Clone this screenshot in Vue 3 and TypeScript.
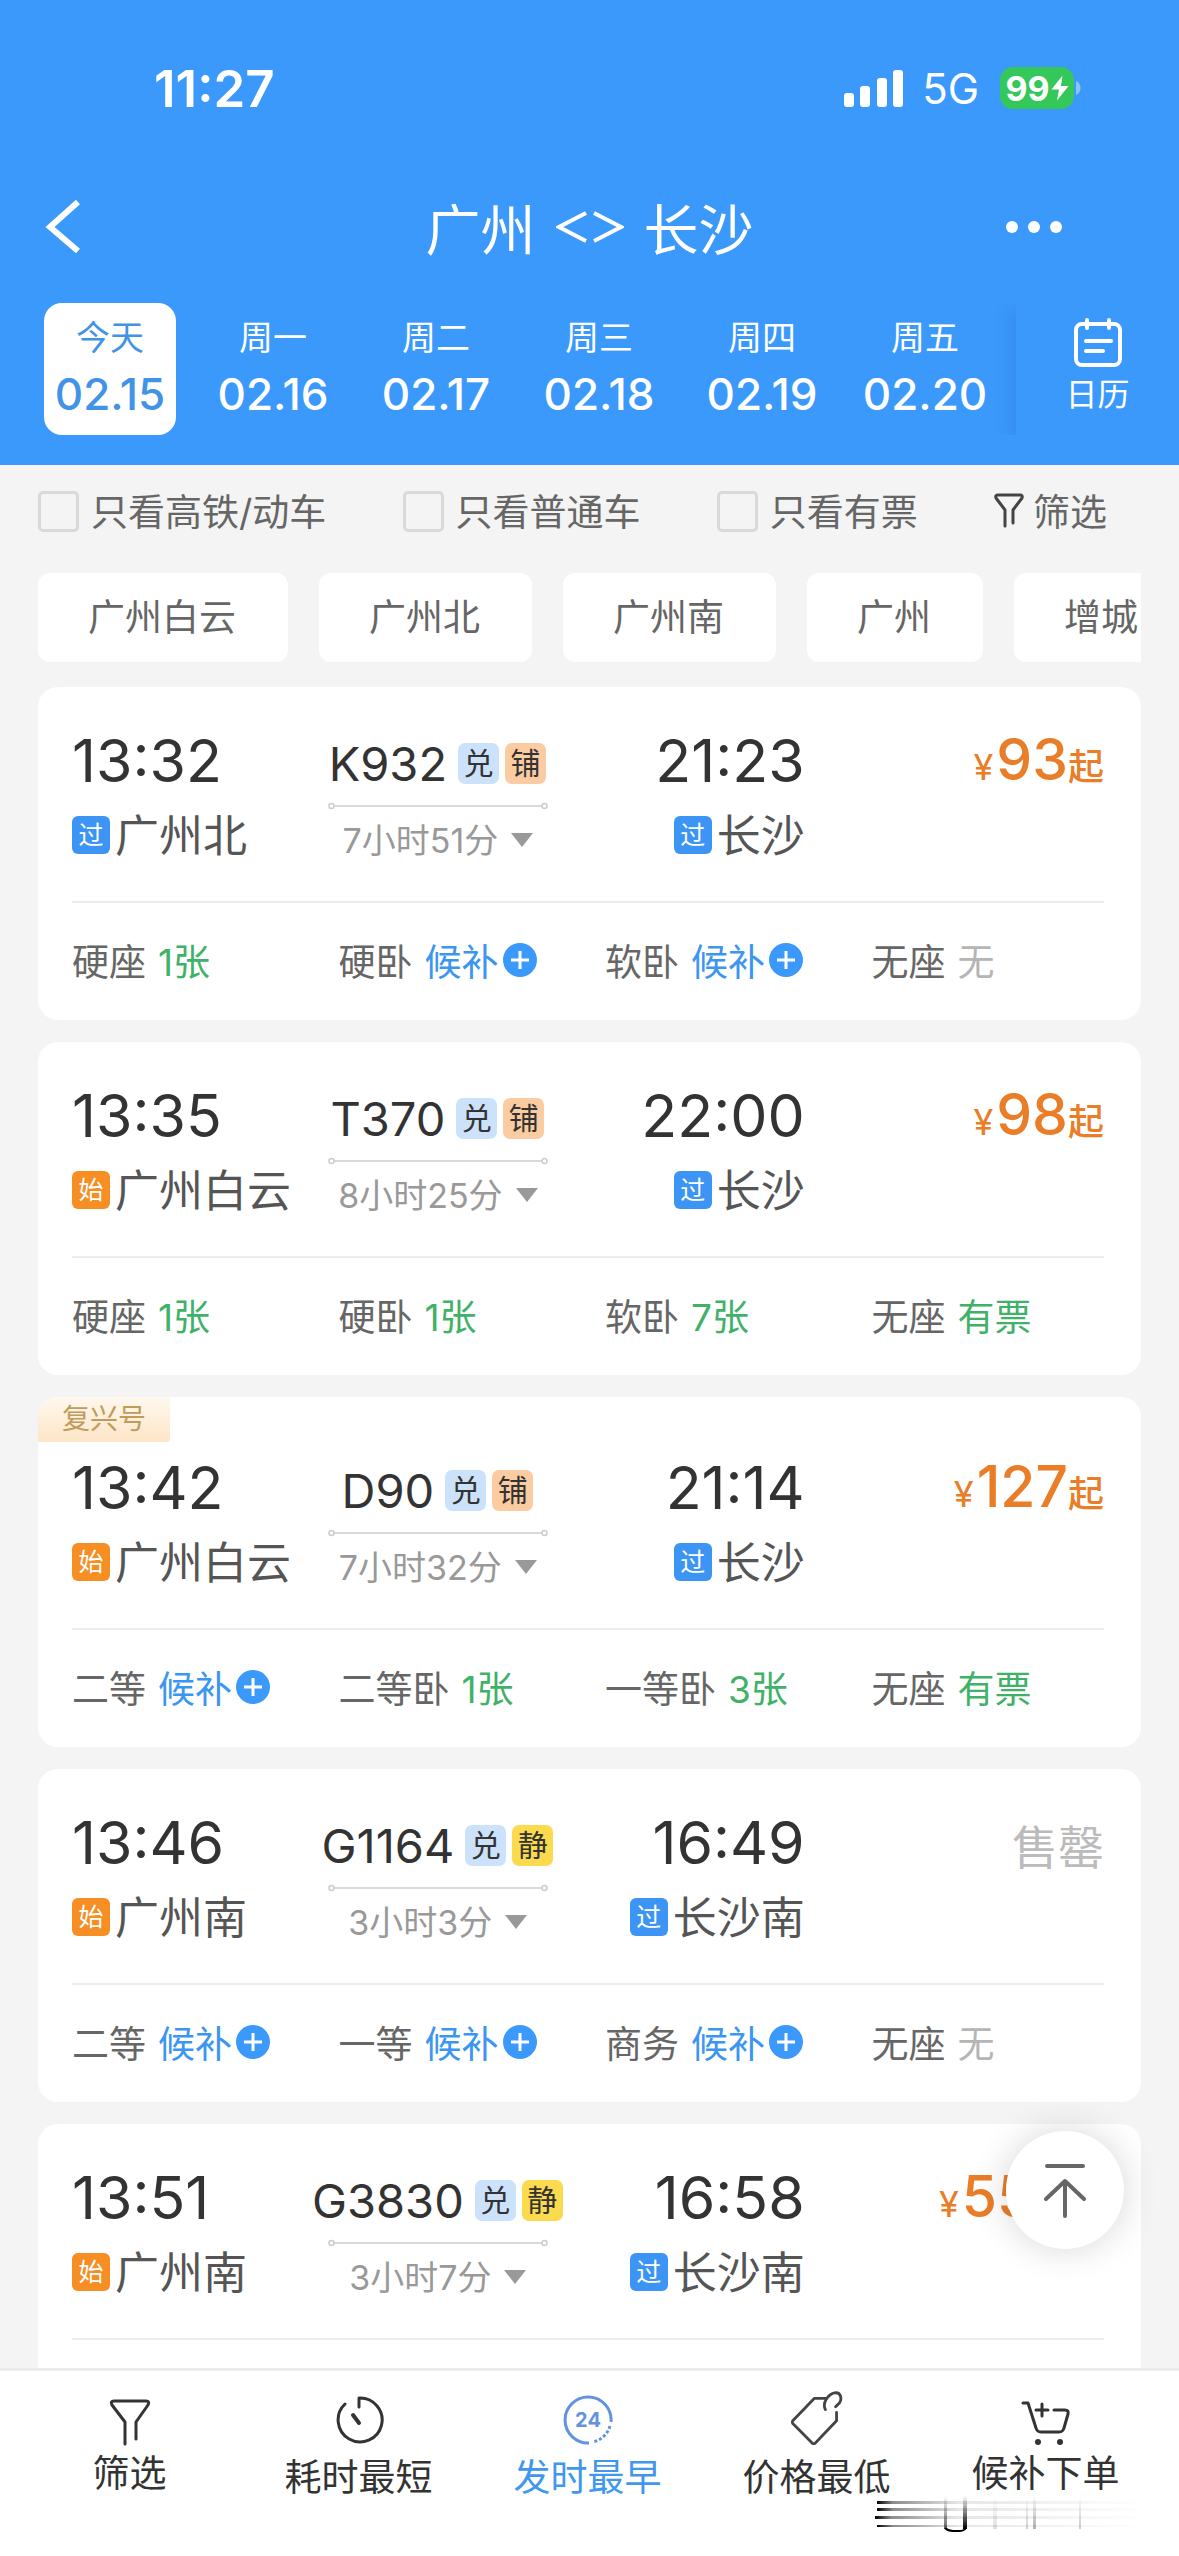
<script setup lang="ts">
import { ref } from 'vue'

interface DayItem {
  label: string
  date: string
}

type SeatState = 'some' | 'wait' | 'none'

interface Seat {
  name: string
  state: SeatState
  text: string
}

interface Train {
  no: string
  badges: string[]
  depart: string
  from: string
  origin: boolean
  arrive: string
  to: string
  duration: string
  price?: string
  fuxing?: boolean
  seats: Seat[]
}

const days: DayItem[] = [
  { label: '今天', date: '02.15' },
  { label: '周一', date: '02.16' },
  { label: '周二', date: '02.17' },
  { label: '周三', date: '02.18' },
  { label: '周四', date: '02.19' },
  { label: '周五', date: '02.20' },
]
const activeDay = ref(0)

const checks = ['只看高铁/动车', '只看普通车', '只看有票']
const stations = ['广州白云', '广州北', '广州南', '广州', '增城']

const some = (name: string, text: string): Seat => ({ name, state: 'some', text })
const wait = (name: string): Seat => ({ name, state: 'wait', text: '候补' })
const none = (name: string): Seat => ({ name, state: 'none', text: '无' })

const trains: Train[] = [
  {
    no: 'K932', badges: ['兑', '铺'], depart: '13:32', from: '广州北', origin: false,
    arrive: '21:23', to: '长沙', duration: '7小时51分', price: '93',
    seats: [some('硬座', '1张'), wait('硬卧'), wait('软卧'), none('无座')],
  },
  {
    no: 'T370', badges: ['兑', '铺'], depart: '13:35', from: '广州白云', origin: true,
    arrive: '22:00', to: '长沙', duration: '8小时25分', price: '98',
    seats: [some('硬座', '1张'), some('硬卧', '1张'), some('软卧', '7张'), some('无座', '有票')],
  },
  {
    no: 'D90', badges: ['兑', '铺'], depart: '13:42', from: '广州白云', origin: true, fuxing: true,
    arrive: '21:14', to: '长沙', duration: '7小时32分', price: '127',
    seats: [wait('二等'), some('二等卧', '1张'), some('一等卧', '3张'), some('无座', '有票')],
  },
  {
    no: 'G1164', badges: ['兑', '静'], depart: '13:46', from: '广州南', origin: true,
    arrive: '16:49', to: '长沙南', duration: '3小时3分',
    seats: [wait('二等'), wait('一等'), wait('商务'), none('无座')],
  },
  {
    no: 'G3830', badges: ['兑', '静'], depart: '13:51', from: '广州南', origin: true,
    arrive: '16:58', to: '长沙南', duration: '3小时7分', price: '553',
    seats: [],
  },
]

const badgeClass: Record<string, string> = {
  兑: 'badge-points',
  铺: 'badge-berth',
  静: 'badge-quiet',
}
</script>

<template>
  <div class="app">
    <header class="header">
      <div class="status">
        <span class="clock">11:27</span>
        <div class="status-right">
          <svg class="signal" width="60" height="38" viewBox="0 0 60 38" fill="#fff">
            <rect x="0" y="24" width="10" height="14" rx="3" />
            <rect x="16" y="17" width="10" height="21" rx="3" />
            <rect x="33" y="9" width="10" height="29" rx="3" />
            <rect x="49" y="1" width="10" height="37" rx="3" />
          </svg>
          <span class="network">5G</span>
          <span class="battery">
            <span class="battery-body">
              99
              <svg width="18" height="26" viewBox="0 0 18 26" fill="#fff"><path d="M11.500 0.500L0.500 14.500h7.500L6 25.500l11.500-14.500h-7.500z" /></svg>
            </span>
            <svg width="5" height="14" viewBox="0 0 5 14"><path d="M0 0C6 3 6 11 0 14z" fill="#8fc4fb" /></svg>
          </span>
        </div>
      </div>

      <div class="titlebar">
        <button class="icon-btn" type="button" aria-label="返回">
          <svg width="36" height="54" viewBox="0 0 36 54" fill="none" stroke="#fff" stroke-width="6"><path d="M33 2L5 27l28 24" /></svg>
        </button>
        <h1 class="title">
          <span>广州</span>
          <svg width="68" height="36" viewBox="0 0 68 36" fill="none" stroke="#fff" stroke-width="4"><path d="M30 5L3 19l27 14M38 5l27 14-27 14" /></svg>
          <span>长沙</span>
        </h1>
        <button class="icon-btn more" type="button" aria-label="更多">
          <svg width="58" height="14" viewBox="0 0 58 14" fill="#fff"><circle cx="7" cy="7" r="6" /><circle cx="29" cy="7" r="6" /><circle cx="51" cy="7" r="6" /></svg>
        </button>
      </div>

      <div class="calendar-row">
        <div class="days">
          <button
            v-for="(d, i) in days"
            :key="d.date"
            type="button"
            class="day"
            :class="{ active: i === activeDay }"
            @click="activeDay = i"
          >
            <span class="day-label">{{ d.label }}</span>
            <span class="day-date">{{ d.date }}</span>
          </button>
        </div>
        <button class="calendar" type="button">
          <svg width="50" height="50" viewBox="0 0 50 50" fill="none" stroke="#fff" stroke-width="4" stroke-linecap="round">
            <rect x="3" y="6" width="44" height="41" rx="6" />
            <path d="M14 2v8M36 2v8M13 23h25M13 33h17" />
          </svg>
          <span>日历</span>
        </button>
      </div>
    </header>

    <main class="content">
      <div class="filters">
        <label v-for="c in checks" :key="c" class="check">
          <input type="checkbox" />
          <span>{{ c }}</span>
        </label>
        <button class="filter-btn" type="button">
          <svg width="30" height="36" viewBox="0 0 30 36" fill="none" stroke="#444" stroke-width="3" stroke-linecap="round" stroke-linejoin="round"><path d="M11 33V17L2 5q-1-3 2-3h22q3 0 2 3l-9 12v13" /></svg>
          <span>筛选</span>
        </button>
      </div>

      <div class="chips">
        <button v-for="s in stations" :key="s" type="button" class="chip">{{ s }}</button>
      </div>

      <div class="list">
        <article v-for="t in trains" :key="t.no" class="card" :class="{ 'has-ribbon': t.fuxing }">
          <span v-if="t.fuxing" class="ribbon">复兴号</span>
          <div class="journey">
            <div class="route">
              <div class="end">
                <div class="time">{{ t.depart }}</div>
                <div class="station">
                  <span class="mark" :class="{ origin: t.origin }">{{ t.origin ? '始' : '过' }}</span>
                  <span class="station-name">{{ t.from }}</span>
                </div>
              </div>
              <div class="middle">
                <div class="number">
                  <span>{{ t.no }}</span>
                  <span class="badges">
                    <span v-for="b in t.badges" :key="b" class="badge" :class="badgeClass[b]">{{ b }}</span>
                  </span>
                </div>
                <svg width="220" height="10" viewBox="0 0 220 10" fill="none" stroke="#ccc" stroke-width="1.500">
                  <circle cx="3.500" cy="5" r="2.500" /><path d="M6 5h208" /><circle cx="216.500" cy="5" r="2.500" />
                </svg>
                <div class="duration">
                  <span class="duration-text">{{ t.duration }}</span>
                  <svg width="24" height="16" viewBox="0 0 24 16" fill="#999"><path d="M1 1h22L12 15z" /></svg>
                </div>
              </div>
              <div class="end right">
                <div class="time">{{ t.arrive }}</div>
                <div class="station">
                  <span class="mark">过</span>
                  <span class="station-name">{{ t.to }}</span>
                </div>
              </div>
            </div>
            <div v-if="t.price" class="price">
              <span class="yen">¥</span><span class="amount">{{ t.price }}</span><span class="from">起</span>
            </div>
            <div v-else class="sold-out">售罄</div>
          </div>
          <div class="seats">
            <div v-for="s in t.seats" :key="s.name" class="seat">
              <span>{{ s.name }}</span>
              <span class="seat-state" :class="s.state">
                {{ s.text }}
                <svg v-if="s.state === 'wait'" width="34" height="34" viewBox="0 0 34 34"><circle cx="17" cy="17" r="17" fill="#3b99fc" /><path d="M8 17h18M17 8v18" stroke="#fff" stroke-width="3" /></svg>
              </span>
            </div>
          </div>
        </article>
      </div>

      <button class="to-top" type="button" aria-label="回到顶部">
        <svg width="46" height="56" viewBox="0 0 46 56" fill="none" stroke="#666" stroke-width="4" stroke-linecap="round" stroke-linejoin="round"><path d="M5 4h36M23 19v35M4 37l19-18 19 18" /></svg>
      </button>
    </main>

    <nav class="tabs">
      <button type="button" class="tab">
        <svg width="44" height="50" viewBox="0 0 44 50" fill="none" stroke="#333" stroke-width="3" stroke-linecap="round" stroke-linejoin="round"><path d="M17 47V25L4 8q-2-4 2-4h32q4 0 2 4L28 25v17" /></svg>
        <span>筛选</span>
      </button>
      <button type="button" class="tab low">
        <svg width="50" height="50" viewBox="0 0 50 50" fill="none" stroke="#333" stroke-width="3" stroke-linecap="round" stroke-linejoin="round"><path d="M11 9A22 22 0 1 0 25 3v9" /><path d="M19 20l6 8" stroke-width="4" /></svg>
        <span>耗时最短</span>
      </button>
      <button type="button" class="tab low active">
        <svg width="50" height="50" viewBox="0 0 50 50" fill="none" stroke="#6392e0" stroke-width="3">
          <path d="M26 48A23 23 0 1 1 48 27" />
          <path d="M47 31A23 23 0 0 1 30 47" stroke-dasharray="3 2" />
          <text x="25" y="32" text-anchor="middle" class="num24">24</text>
        </svg>
        <span>发时最早</span>
      </button>
      <button type="button" class="tab low">
        <svg width="54" height="54" viewBox="0 0 56 58" fill="none" stroke="#444" stroke-width="3" stroke-linecap="round" stroke-linejoin="round">
          <path d="M38 8H25L2 32q-1 1 0 3l21 21q2 1 3 0l23-24V23" />
          <path d="M37 20c-4-8 4-17 10-18 7-1 8 7 5 11l-4 4" />
        </svg>
        <span>价格最低</span>
      </button>
      <button type="button" class="tab">
        <svg width="50" height="46" viewBox="0 0 50 46" fill="none" stroke="#333" stroke-width="3" stroke-linecap="round" stroke-linejoin="round">
          <path d="M2 2h5l8 25q1 4 5 4h18q4 0 5-4l4-14q1-4-3-4H33M21 3v12M15 9h12" />
          <g fill="#333" stroke="none"><circle cx="17" cy="41" r="3" /><circle cx="39" cy="41" r="3" /></g>
        </svg>
        <span>候补下单</span>
      </button>
      <svg class="streaks" width="280" height="38" viewBox="0 0 280 38" aria-hidden="true">
        <defs>
          <linearGradient id="fadeRight" x1="0" x2="1" y1="0" y2="0">
            <stop offset="0" stop-color="#000" /><stop offset="0.060" stop-color="#000" stop-opacity="0.450" />
            <stop offset="0.300" stop-color="#000" stop-opacity="0.100" /><stop offset="1" stop-color="#000" stop-opacity="0" />
          </linearGradient>
          <linearGradient id="fadeUp" x1="0" x2="0" y1="1" y2="0">
            <stop offset="0" stop-color="#000" /><stop offset="1" stop-color="#000" stop-opacity="0" />
          </linearGradient>
        </defs>
        <g fill="url(#fadeRight)">
          <rect x="2" y="5" width="270" height="3" /><rect x="2" y="12" width="270" height="3" />
          <rect x="0" y="20" width="272" height="3" /><rect x="2" y="29" width="270" height="2" />
        </g>
        <g fill="url(#fadeUp)">
          <rect x="69" y="0" width="3" height="33" opacity="0.600" /><rect x="88" y="0" width="4" height="33" />
          <rect x="118" y="0" width="4" height="33" opacity="0.120" /><rect x="151" y="0" width="2" height="33" opacity="0.180" />
          <rect x="158" y="0" width="3" height="33" opacity="0.300" /><rect x="204" y="0" width="2" height="33" opacity="0.200" />
        </g>
        <path d="M70 32q3 3 8 3h6q5 0 7-3" fill="none" stroke="#000" stroke-width="2" />
      </svg>
    </nav>
  </div>
</template>

<style>
body {
  margin: 0;
  background: #f4f4f4;
}
</style>

<style scoped>
.app {
  display: flex;
  flex-direction: column;
  height: 100vh;
  overflow: hidden;
  background: #f4f4f4;
  color: #333;
  font-family: Inter, "Noto Sans CJK SC", sans-serif;
  white-space: nowrap;
}
button {
  margin: 0;
  padding: 0;
  border: 0;
  background: none;
  color: inherit;
  font: inherit;
  cursor: pointer;
}
svg {
  display: block;
  flex: none;
}

/* header */
.header {
  flex: none;
  padding-bottom: 30px;
  background: #3b99fc;
  color: #fff;
}
.status {
  display: flex;
  align-items: center;
  justify-content: space-between;
  height: 176px;
  padding: 0 98px 0 154px;
}
.clock {
  font-size: 51px;
  font-weight: 600;
}
.status-right {
  display: flex;
  align-items: center;
}
.network {
  margin: 0 21px 0 18px;
  font-size: 42px;
}
.battery {
  display: flex;
  align-items: center;
  gap: 2px;
}
.battery-body {
  display: flex;
  align-items: center;
  justify-content: center;
  gap: 1px;
  width: 74px;
  height: 42px;
  border-radius: 13px;
  background: #34c759;
  font-size: 34px;
  font-weight: 700;
}
.titlebar {
  display: grid;
  grid-template-columns: 1fr auto 1fr;
  align-items: center;
  height: 102px;
  padding: 0 45px;
}
.icon-btn {
  justify-self: start;
}
.more {
  justify-self: end;
  margin-right: 71px;
}
.title {
  display: flex;
  align-items: center;
  gap: 20px;
  margin: 0;
  padding-bottom: 3px;
  font-size: 55px;
  font-weight: 400;
}
.calendar-row {
  display: flex;
  margin-top: 25px;
  overflow: hidden;
}
.days {
  display: flex;
  flex: 1;
  gap: 31px;
  padding: 0 25px 0 44px;
}
.day {
  display: flex;
  flex: 1 1 0;
  flex-direction: column;
  align-items: center;
  min-width: 0;
  padding: 9px 0 11px;
  border-radius: 18px;
}
.day.active {
  background: #fff;
  color: #4293e6;
}
.day-label {
  font-size: 34px;
  line-height: 52px;
}
.day-date {
  font-size: 44px;
  font-weight: 500;
  line-height: 60px;
}
.calendar {
  display: flex;
  flex-direction: column;
  align-items: center;
  width: 163px;
  padding-top: 15px;
  box-shadow: -6px 6px 16px rgba(20, 60, 140, 0.120);
  font-size: 32px;
  line-height: 54px;
}

/* filters */
.content {
  position: relative;
  flex: 1;
  min-height: 0;
  overflow: hidden;
}
.filters {
  display: flex;
  align-items: center;
  justify-content: space-between;
  height: 92px;
  padding: 0 72px 0 38px;
  color: #666;
  font-size: 37px;
}
.filters span {
  padding-bottom: 3px;
}
.check {
  display: flex;
  align-items: center;
  gap: 12px;
}
.check input {
  width: 41px;
  height: 41px;
  margin: 0;
  appearance: none;
  border: 3px solid #d9d9d9;
  border-radius: 5px;
}
.filter-btn {
  display: flex;
  align-items: center;
  gap: 9px;
}
.chips {
  display: flex;
  gap: 31px;
  margin: 16px 38px 25px;
  overflow: hidden;
}
.chip {
  flex: none;
  padding: 0 52px 0 50px;
  border-radius: 12px;
  background: #fff;
  color: #666;
  font-size: 37px;
  line-height: 89px;
}

/* train cards */
.list {
  display: flex;
  flex-direction: column;
  gap: 22px;
  padding: 0 38px;
}
.card {
  position: relative;
  overflow: hidden;
  border-radius: 20px;
  background: #fff;
}
.has-ribbon {
  padding-top: 17px;
}
.ribbon {
  position: absolute;
  top: 0;
  left: 0;
  padding: 0 24px;
  border-bottom-right-radius: 4px;
  background: linear-gradient(#fff8ee, #fde5c6);
  color: #bf9c5c;
  font-size: 28px;
  line-height: 45px;
}
.journey {
  display: flex;
  align-items: flex-start;
  justify-content: space-between;
  margin: 0 37px 0 34px;
  padding: 38px 0 28px;
  border-bottom: 2px solid #ececec;
}
.route {
  display: grid;
  flex: none;
  grid-template-columns: 1fr 256px 1fr;
  width: 71%;
}
.time {
  font-size: 59px;
  font-weight: 400;
  line-height: 72px;
}
.station {
  display: flex;
  align-items: center;
  gap: 5px;
  height: 76px;
  color: #555;
  font-size: 44px;
}
.station-name {
  padding-bottom: 4px;
}
.mark {
  width: 38px;
  border-radius: 6px;
  background: #3c95f4;
  color: #fff;
  font-size: 25px;
  line-height: 38px;
  text-align: center;
}
.mark.origin {
  background: #f68e23;
}
.right {
  text-align: right;
}
.right .station {
  justify-content: flex-end;
}
.middle {
  display: flex;
  flex-direction: column;
  align-items: center;
}
.number {
  display: flex;
  align-items: center;
  gap: 11px;
  height: 76px;
  padding-right: 2px;
  font-size: 47px;
}
.badges {
  display: flex;
  gap: 6px;
}
.badge {
  width: 41px;
  border-radius: 7px;
  font-size: 30px;
  line-height: 41px;
  text-align: center;
}
.badge-points {
  background: #cce2fb;
}
.badge-berth {
  background: #fbcba2;
}
.badge-quiet {
  background: #fbda4e;
}
.duration {
  display: flex;
  align-items: center;
  gap: 12px;
  height: 58px;
  color: #999;
  font-size: 34px;
}
.duration-text {
  padding-bottom: 3px;
}
.price {
  color: #ea7d28;
  line-height: 70px;
}
.yen {
  margin-right: 3px;
  font-size: 36px;
}
.amount {
  font-size: 57px;
  font-weight: 500;
}
.from {
  font-size: 36px;
  font-weight: 500;
}
.sold-out {
  color: #bbb;
  font-size: 46px;
  line-height: 80px;
}
.seats {
  display: grid;
  box-sizing: border-box;
  grid-template-columns: repeat(4, 1fr);
  align-items: center;
  height: 117px;
  padding: 0 3px 3px 34px;
}
.seat {
  display: flex;
  gap: 12px;
  color: #666;
  font-size: 37px;
}
.seat-state {
  display: flex;
  align-items: center;
  gap: 4px;
}
.some {
  color: #3fb268;
}
.wait {
  color: #3b95f2;
}
.none {
  color: #b5b5b5;
}

/* back to top, floating over the list */
.to-top {
  position: absolute;
  right: 55px;
  bottom: 119px;
  display: flex;
  align-items: center;
  justify-content: center;
  width: 118px;
  height: 118px;
  border-radius: 50%;
  background: #fff;
  box-shadow: 0 0 36px rgba(0, 0, 0, 0.160);
}

/* bottom tabs */
.tabs {
  position: relative;
  display: flex;
  flex: none;
  padding: 0 19px 53px 15px;
  border-top: 3px solid #ececec;
  background: #fff;
}
.tab {
  display: flex;
  flex: 1 1 0;
  flex-direction: column;
  align-items: center;
  justify-content: flex-end;
  height: 132px;
  padding-bottom: 4px;
  font-size: 37px;
  line-height: 50px;
}
.tab svg {
  margin-bottom: 2px;
}
.tab.low {
  padding-bottom: 0;
}
.tab.low svg {
  margin-bottom: 8px;
}
.tab.active {
  color: #3f97ee;
}
.num24 {
  fill: #6392e0;
  stroke: none;
  font-size: 20px;
  font-weight: 700;
}
.streaks {
  position: absolute;
  right: 24px;
  bottom: 22px;
}
</style>
